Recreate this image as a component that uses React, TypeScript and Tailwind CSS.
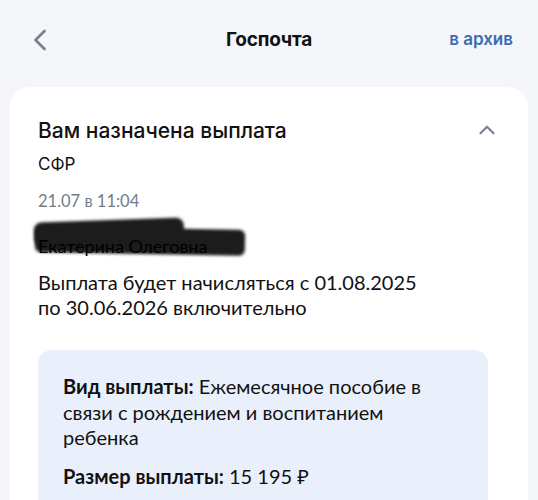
import { ChevronLeft, ChevronUp } from 'lucide-react';

function App() {
  return (
    <div className="min-h-screen bg-[#f5f6f9] font-['Inter','Noto_Sans',sans-serif] text-[#111]">
      {/* Header */}
      <div className="relative flex h-[80px] items-center justify-between pl-[22px] pr-[25px]">
        <ChevronLeft className="h-[36px] w-[36px] text-[#7b828f]" strokeWidth={1.8} />
        <h1 className="absolute left-1/2 top-[40px] -translate-x-1/2 -translate-y-1/2 text-[19px] font-bold tracking-[-0.2px]">
          Госпочта
        </h1>
        <button className="text-[17px] font-semibold text-[#3a6cb5]">в архив</button>
      </div>

      {/* Card */}
      <div className="mx-[10px] mt-[7px] rounded-[20px] bg-white pl-[28px] pr-[40px] pt-[30px] pb-[40px]">
        <div className="flex items-start justify-between">
          <h2 className="text-[21px] font-medium leading-[28px]">Вам назначена выплата</h2>
          <ChevronUp className="mr-[-12px] mt-[0px] h-[26px] w-[26px] text-[#7b828f]" strokeWidth={2} />
        </div>
        <div className="mt-[7px] text-[17px] leading-[24px]">СФР</div>
        <div className="mt-[15px] font-['Lato','Noto_Sans',sans-serif] text-[16.5px] leading-[20px] text-[#757b86]">
          21.07 в 11:04
        </div>

        <div className="relative mt-[23px] inline-block font-['Lato','Noto_Sans',sans-serif] text-[18px] leading-[24px]">
          <div className="absolute left-[-4px] top-[-14px] h-[24px] w-[150px] -rotate-2 rounded-[8px] bg-[#1c1c1c] blur-[1.5px]" />
          <div className="absolute left-[-3px] top-[-6px] h-[26px] w-[210px] rotate-1 rounded-[6px] bg-[#1c1c1c] blur-[1.5px]" />
          <span className="relative text-black">Екатерина Олеговна</span>
        </div>

        <p className="mt-[11px] font-['Lato','Noto_Sans',sans-serif] text-[20px] leading-[25px]">
          Выплата будет начисляться с 01.08.2025
          <br />
          по 30.06.2026 включительно
        </p>

        <div className="mt-[30px] rounded-[14px] bg-[#eaf0fb] px-[25px] pt-[24px] pb-[40px] font-['Lato','Noto_Sans',sans-serif] text-[20px] leading-[25.5px]">
          <p>
            <span className="font-bold">Вид выплаты:</span> Ежемесячное пособие в
            <br />
            связи с рождением и воспитанием
            <br />
            ребенка
          </p>
          <p className="mt-[13px]">
            <span className="font-bold">Размер выплаты:</span> 15 195 ₽
          </p>
        </div>
      </div>
    </div>
  );
}

export default App;
